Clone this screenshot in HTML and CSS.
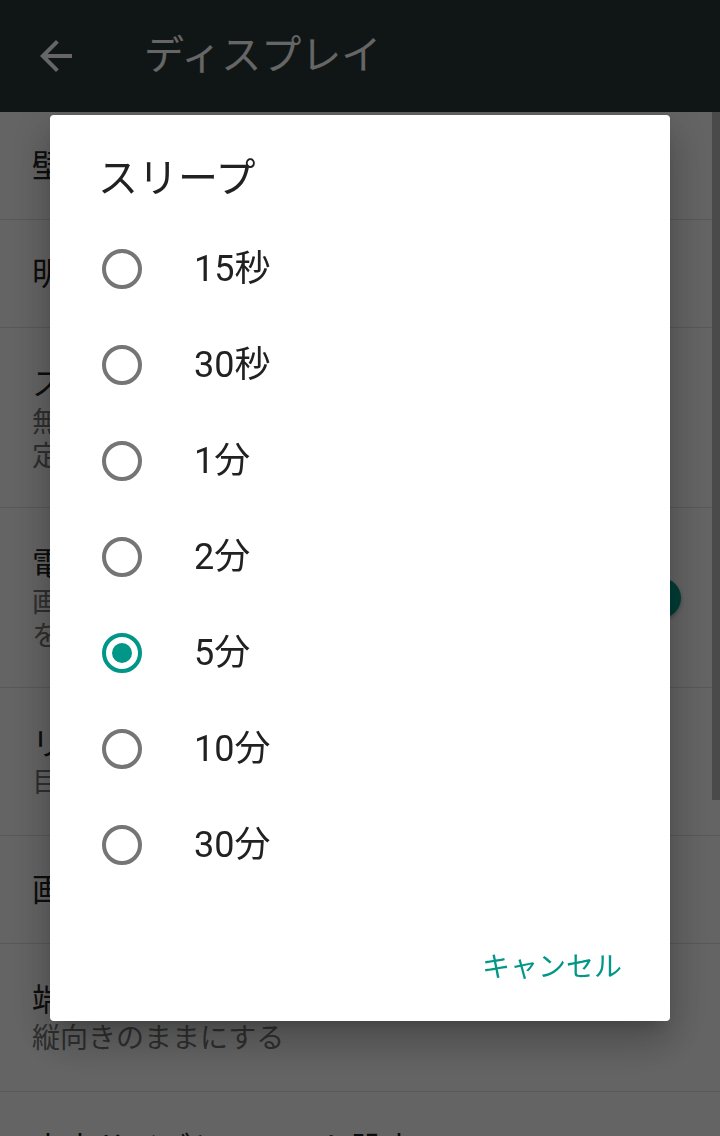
FILE: index.html
```html
<!DOCTYPE html>
<html lang="ja">
<head>
    <meta charset="UTF-8">
    <meta name="viewport" content="width=device-width, initial-scale=1.0">
    <title>ディスプレイ</title>
    <link rel="stylesheet" href="styles.css">
</head>
<body>
    <div class="page">
        <header class="toolbar">
            <span class="back">
                <svg viewBox="0 0 24 24" width="48" height="48"><path d="M20 11H7.83l5.59-5.59L12 4l-8 8 8 8 1.41-1.41L7.83 13H20v-2z" fill="#fff"/></svg>
            </span>
            <h1>ディスプレイ</h1>
        </header>
        <ul class="settings">
            <li class="row"><div class="text"><p class="title">壁紙</p></div></li>
            <li class="row"><div class="text"><p class="title">明るさのレベル</p></div></li>
            <li class="row">
                <div class="text">
                    <p class="title">スリープ</p>
                    <p class="summary">無操作状態が5分続くと画面をオフにする設<br>定になっています</p>
                </div>
            </li>
            <li class="row">
                <div class="text">
                    <p class="title">電池の節約モード</p>
                    <p class="summary">画面の明るさを自動で下げて電池の消費<br>を抑えます</p>
                </div>
                <div class="switch"><span class="track"></span><span class="thumb"></span></div>
            </li>
            <li class="row">
                <div class="text">
                    <p class="title">リーディングモード</p>
                    <p class="summary">目にやさしい表示に切り替えます</p>
                </div>
            </li>
            <li class="row"><div class="text"><p class="title">画面の表示サイズ</p></div></li>
            <li class="row">
                <div class="text">
                    <p class="title">端末を回転させたとき</p>
                    <p class="summary">縦向きのままにする</p>
                </div>
            </li>
            <li class="row last"><div class="text"><p class="title">文字サイズとフォント設定</p></div></li>
        </ul>
        <div class="scrollbar"></div>
    </div>

    <div class="scrim"></div>

    <div class="dialog">
        <h2 class="dialog-title">スリープ</h2>
        <ul class="choices">
            <li class="choice"><span class="radio"></span>15秒</li>
            <li class="choice"><span class="radio"></span>30秒</li>
            <li class="choice"><span class="radio"></span>1分</li>
            <li class="choice"><span class="radio"></span>2分</li>
            <li class="choice checked"><span class="radio"></span>5分</li>
            <li class="choice"><span class="radio"></span>10分</li>
            <li class="choice"><span class="radio"></span>30分</li>
        </ul>
        <div class="actions">
            <button class="btn">キャンセル</button>
        </div>
    </div>
</body>
</html>
```

FILE: styles.css
```css
body {
    font-family: Roboto, "Noto Sans CJK JP", sans-serif;
    margin: 0;
    padding: 0;
    background-color: #fafafa;
    color: #212121;
}
.page {
    position: relative;
    width: 720px;
    height: 1136px;
    overflow: hidden;
    background-color: #fafafa;
}
.toolbar {
    height: 112px;
    background-color: #2a3939;
    display: flex;
    align-items: center;
    padding-left: 32px;
    box-sizing: border-box;
}
.back {
    display: flex;
    width: 48px;
    height: 48px;
}
.toolbar h1 {
    margin: 0 0 0 64px;
    font-size: 40px;
    font-weight: normal;
    color: #fff;
    line-height: 48px;
}
.settings {
    list-style: none;
    margin: 0;
    padding: 0;
}
.row {
    display: flex;
    align-items: center;
    padding: 34px 32px 33px;
    border-bottom: 1px solid #dcdcdc;
}
.row .text {
    flex: 1;
}
.title {
    margin: 0;
    font-size: 32px;
    line-height: 44px;
}
.summary {
    margin: 0;
    font-size: 28px;
    line-height: 34px;
    color: #757575;
}
.row:nth-child(1), .row:nth-child(2), .row:nth-child(6), .row:nth-child(8) {
    padding-top: 32px;
    padding-bottom: 31px;
}
.row:nth-child(5), .row:nth-child(7) {
    padding-bottom: 35px;
}
.row.last {
    padding-top: 35px;
}
.switch {
    position: relative;
    width: 68px;
    height: 40px;
    margin-right: 7px;
}
.track {
    position: absolute;
    left: 0;
    right: 6px;
    top: 6px;
    height: 28px;
    border-radius: 14px;
    background-color: #80cbc4;
}
.thumb {
    position: absolute;
    right: 0;
    top: 0;
    width: 40px;
    height: 40px;
    border-radius: 50%;
    background-color: #009688;
    box-shadow: 0 2px 4px rgba(0, 0, 0, 0.3);
}
.scrollbar {
    position: absolute;
    right: 0;
    top: 112px;
    width: 8px;
    height: 688px;
    background-color: #b8b8b8;
}
.scrim {
    position: fixed;
    inset: 0;
    background-color: rgba(0, 0, 0, 0.6);
}
.dialog {
    position: fixed;
    left: 50px;
    top: 115px;
    width: 620px;
    height: 906px;
    box-sizing: border-box;
    padding-top: 40px;
    background-color: #fff;
    border-radius: 4px;
    box-shadow: 0 24px 38px 3px rgba(0, 0, 0, 0.14), 0 9px 46px 8px rgba(0, 0, 0, 0.12), 0 11px 15px -7px rgba(0, 0, 0, 0.2);
    display: flex;
    flex-direction: column;
}
.dialog-title {
    margin: 0 48px;
    font-size: 40px;
    font-weight: normal;
    line-height: 48px;
    color: #212121;
}
.choices {
    list-style: none;
    margin: 18px 0 0;
    padding: 0;
}
.choice {
    display: flex;
    align-items: center;
    height: 96px;
    padding-left: 52px;
    font-size: 36px;
    line-height: 42px;
    color: #212121;
}
.radio {
    width: 40px;
    height: 40px;
    box-sizing: border-box;
    border: 4px solid #757575;
    border-radius: 50%;
    margin-right: 52px;
    display: flex;
    align-items: center;
    justify-content: center;
}
.checked .radio {
    border-color: #009688;
}
.checked .radio::after {
    content: "";
    width: 20px;
    height: 20px;
    border-radius: 50%;
    background-color: #009688;
}
.actions {
    display: flex;
    justify-content: flex-end;
    margin-top: 36px;
    padding-right: 16px;
}
.btn {
    height: 72px;
    padding: 0 32px 0 16px;
    border: none;
    background: none;
    font-family: Roboto, "Noto Sans CJK JP", sans-serif;
    font-size: 28px;
    color: #009688;
    cursor: pointer;
}
```
